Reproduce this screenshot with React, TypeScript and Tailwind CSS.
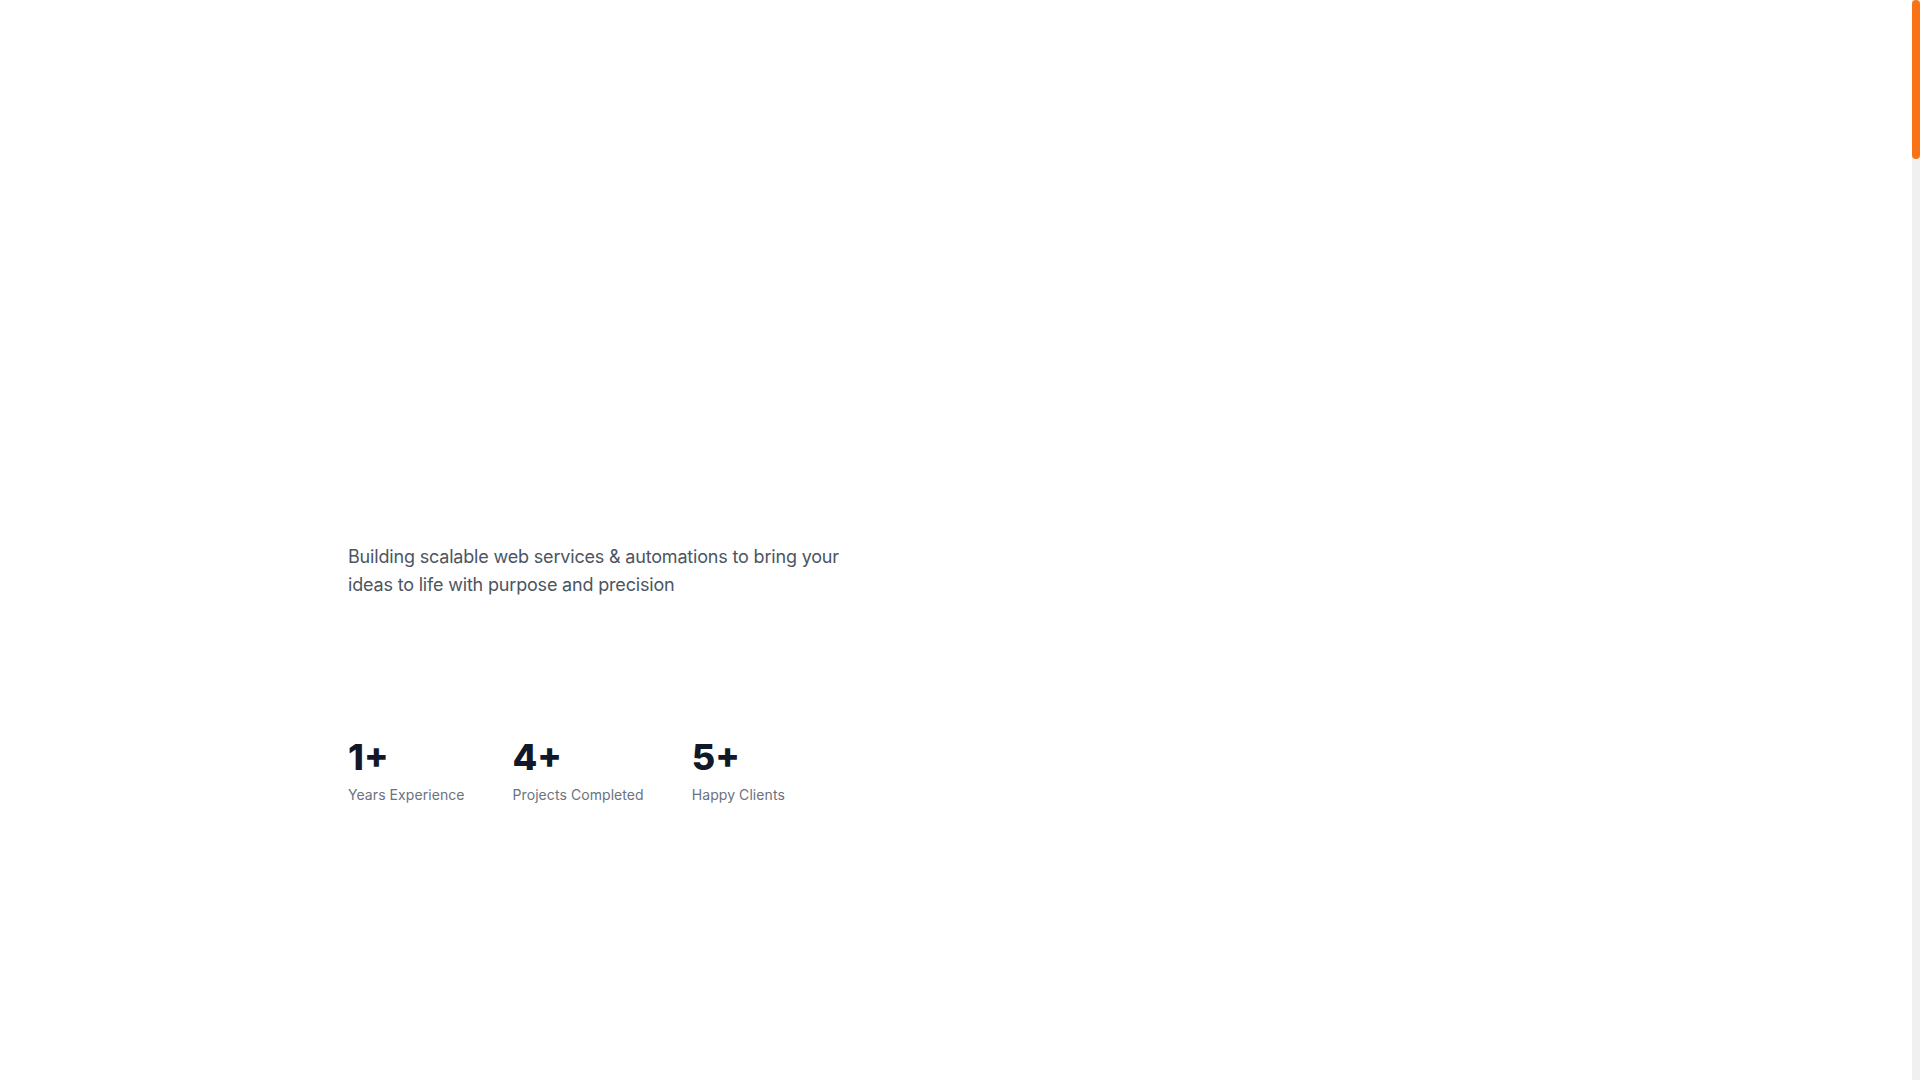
import React from "react";

const stats = [
  { value: "1+", label: "Years Experience" },
  { value: "4+", label: "Projects Completed" },
  { value: "5+", label: "Happy Clients" },
];

export default function App() {
  return (
    <div
      className="flex h-screen overflow-hidden bg-white"
      style={{ fontFamily: "Inter, 'Noto Sans', sans-serif" }}
    >
      <main className="flex-1 overflow-hidden">
        <section className="mx-auto max-w-7xl px-8 pt-[543px]">
          <p className="max-w-lg text-lg tracking-[-0.01em] text-[#4b5563]">
            Building scalable web services &amp; automations to bring your ideas to life with purpose and precision
          </p>
          <div className="mt-[138px] flex gap-12">
            {stats.map((s) => (
              <div key={s.label} className="flex flex-col">
                <span className="text-4xl leading-10 font-extrabold text-[#111827]">{s.value}</span>
                <span className="mt-2 text-sm tracking-[0.005em] text-[#6b7280]">{s.label}</span>
              </div>
            ))}
          </div>
        </section>
      </main>
      <aside className="flex w-2 shrink-0 flex-col bg-[#f0f0f0]">
        <div className="h-[159px] w-2 rounded-full bg-[#f97316]" />
      </aside>
    </div>
  );
}
